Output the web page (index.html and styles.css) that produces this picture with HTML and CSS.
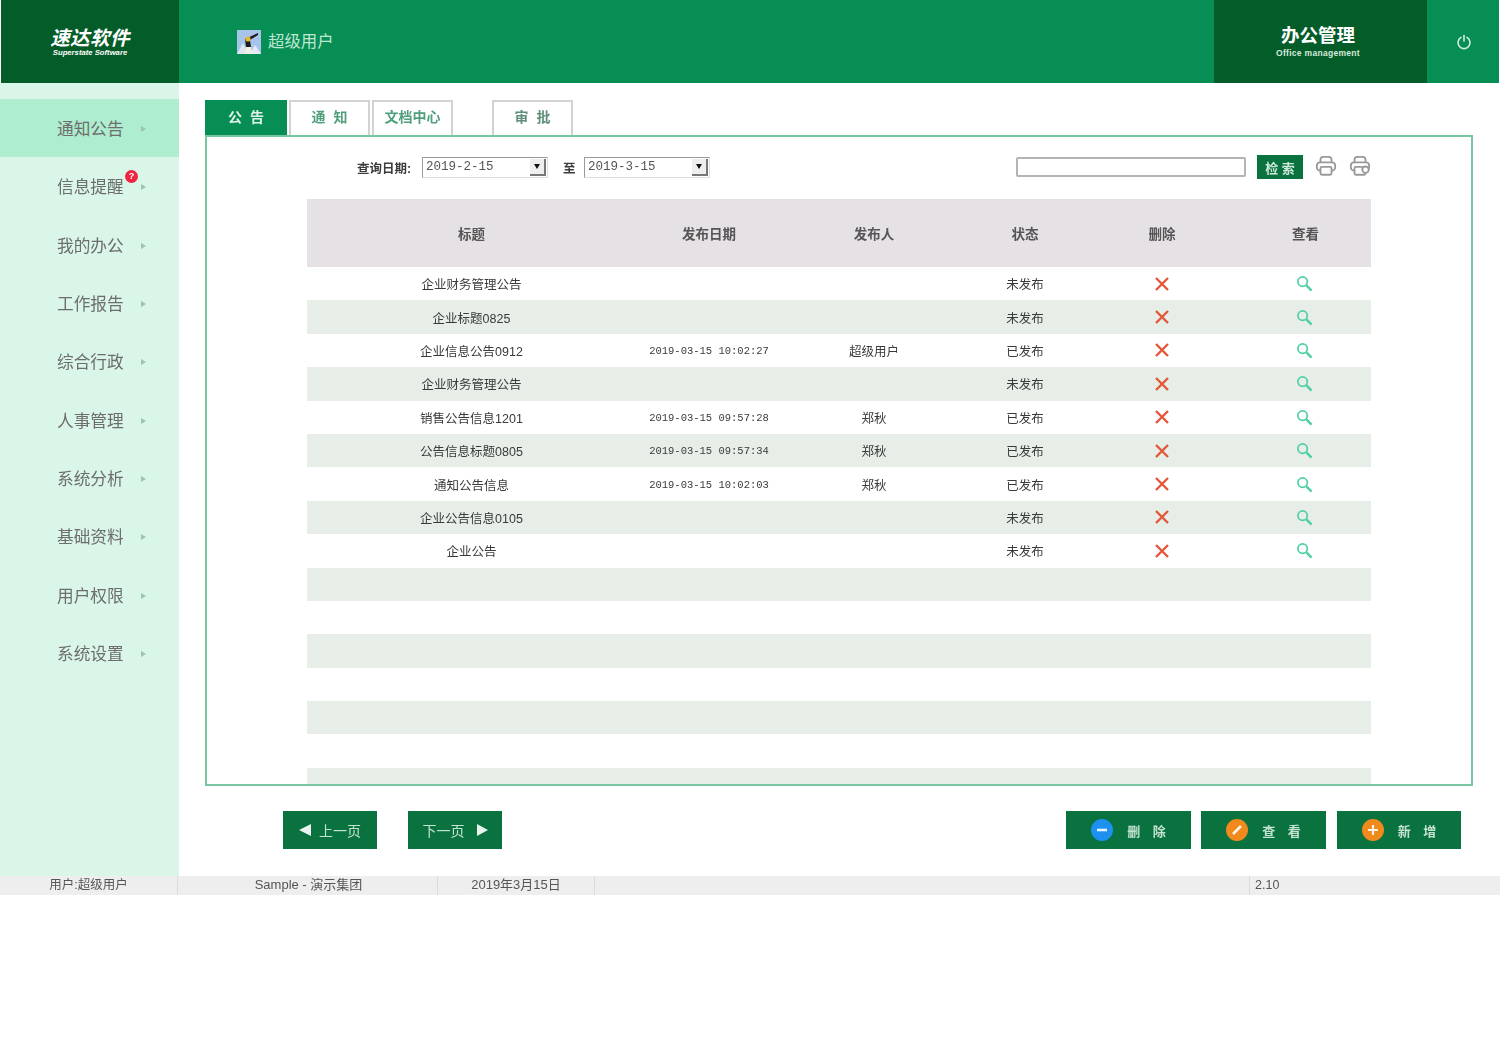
FILE: index.html
```html
<!DOCTYPE html>
<html lang="zh-CN">
<head>
  <meta charset="UTF-8">
  <title>速达软件 办公管理</title>
  <link rel="stylesheet" href="styles.css">
</head>
<body>
  <div class="app">
    <header class="topbar">
      <div class="brand">
        <strong>速达软件</strong>
        <small>Superstate Software</small>
      </div>
      <div class="user">
        <svg class="avatar" viewBox="0 0 24 24" width="24" height="24">
          <rect width="24" height="24" fill="#a9c4ea"/>
          <path d="M0 24 L6 13 L11 24 Z" fill="#dfe7f2"/>
          <path d="M13 24 L18 15 L24 24 Z" fill="#e6ebf3"/>
          <path d="M8 9 L21 3 L21 5 L13 10 L14 17 L9 17 Z" fill="#1c1c1c"/>
          <circle cx="11" cy="9" r="2.6" fill="#e8b830"/>
          <path d="M9 17 L14 17 L15 24 L8 24 Z" fill="#f3efe2"/>
        </svg>
        <span>超级用户</span>
      </div>
      <div class="module">
        <strong>办公管理</strong>
        <small>Office management</small>
      </div>
      <div class="power">
        <svg viewBox="0 0 16 16" width="16" height="16" fill="none" stroke="#d5efe2" stroke-width="1.6" stroke-linecap="round">
          <path d="M5 3.4 A6 6 0 1 0 11 3.4"/>
          <path d="M8 1.5 V7"/>
        </svg>
      </div>
    </header>

    <div class="middle">
      <nav class="sidebar">
        <a class="nav-item active"><span>通知公告</span><i></i></a>
        <a class="nav-item"><span>信息提醒</span><b class="badge">?</b><i></i></a>
        <a class="nav-item"><span>我的办公</span><i></i></a>
        <a class="nav-item"><span>工作报告</span><i></i></a>
        <a class="nav-item"><span>综合行政</span><i></i></a>
        <a class="nav-item"><span>人事管理</span><i></i></a>
        <a class="nav-item"><span>系统分析</span><i></i></a>
        <a class="nav-item"><span>基础资料</span><i></i></a>
        <a class="nav-item"><span>用户权限</span><i></i></a>
        <a class="nav-item"><span>系统设置</span><i></i></a>
      </nav>

      <main class="content">
        <div class="tabs">
          <a class="tab active">公&nbsp;&nbsp;告</a>
          <a class="tab">通&nbsp;&nbsp;知</a>
          <a class="tab">文档中心</a>
          <a class="tab tab-gap">审&nbsp;&nbsp;批</a>
        </div>

        <section class="panel">
          <div class="toolbar">
            <label class="date-label">查询日期:</label>
            <div class="date-field"><span>2019-2-15</span><i></i></div>
            <label class="date-sep">至</label>
            <div class="date-field"><span>2019-3-15</span><i></i></div>
            <div class="search-box"></div>
            <button class="search-btn">检 索</button>
            <svg class="tool-icon" viewBox="0 0 24 24" width="22" height="22" fill="none" stroke="#999" stroke-width="2">
              <path d="M6 8 V5 Q6 2 9 2 H15 Q18 2 18 5 V8"/>
              <rect x="2" y="8" width="20" height="9" rx="3.5"/>
              <rect x="6" y="13" width="12" height="8.5" rx="1.5" fill="#fff"/>
            </svg>
            <svg class="tool-icon" viewBox="0 0 24 24" width="22" height="22" fill="none" stroke="#999" stroke-width="2">
              <path d="M6 8 V5 Q6 2 9 2 H15 Q18 2 18 5 V8"/>
              <rect x="2" y="8" width="20" height="9" rx="3.5"/>
              <rect x="6" y="13" width="12" height="8.5" rx="1.5" fill="#fff"/>
              <circle cx="18" cy="16" r="3.5" fill="#fff"/>
            </svg>
          </div>

          <table class="grid">
            <colgroup>
              <col class="col-title"><col class="col-date"><col class="col-author">
              <col class="col-state"><col class="col-del"><col class="col-view">
            </colgroup>
            <thead>
              <tr><th>标题</th><th>发布日期</th><th>发布人</th><th>状态</th><th>删除</th><th>查看</th></tr>
            </thead>
            <tbody id="rows"></tbody>
          </table>
        </section>

        <div class="pager">
          <button class="btn btn-page"><i class="arrow-left"></i>上一页</button>
          <button class="btn btn-page"><span>下一页</span><i class="arrow-right"></i></button>
          <div class="actions">
            <button class="btn btn-action">
              <svg viewBox="0 0 22 22" width="22" height="22"><circle cx="11" cy="11" r="11" fill="#1e90f0"/><path d="M6 11 H16" stroke="#e8f4ff" stroke-width="2.6"/></svg>
              <span>删 除</span>
            </button>
            <button class="btn btn-action">
              <svg viewBox="0 0 22 22" width="22" height="22"><circle cx="11" cy="11" r="11" fill="#f08a1d"/><path d="M7 15 L15 7" stroke="#fff3e2" stroke-width="2.6"/></svg>
              <span>查 看</span>
            </button>
            <button class="btn btn-action btn-add">
              <svg viewBox="0 0 22 22" width="22" height="22"><circle cx="11" cy="11" r="11" fill="#f08a1d"/><path d="M6 11 H16 M11 6 V16" stroke="#fff3e2" stroke-width="2.2"/></svg>
              <span>新 增</span>
            </button>
          </div>
        </div>
      </main>
    </div>

    <footer class="statusbar">
      <div class="cell cell-user">用户:超级用户</div>
      <div class="cell cell-org">Sample - 演示集团</div>
      <div class="cell cell-day">2019年3月15日</div>
      <div class="cell cell-fill"></div>
      <div class="cell cell-ver">2.10</div>
    </footer>
  </div>

  <script>
    // 公告列表数据
    const notices = [
      ['企业财务管理公告', '', '', '未发布'],
      ['企业标题0825', '', '', '未发布'],
      ['企业信息公告0912', '2019-03-15 10:02:27', '超级用户', '已发布'],
      ['企业财务管理公告', '', '', '未发布'],
      ['销售公告信息1201', '2019-03-15 09:57:28', '郑秋', '已发布'],
      ['公告信息标题0805', '2019-03-15 09:57:34', '郑秋', '已发布'],
      ['通知公告信息', '2019-03-15 10:02:03', '郑秋', '已发布'],
      ['企业公告信息0105', '', '', '未发布'],
      ['企业公告', '', '', '未发布']
    ];
    const delIcon = '<svg viewBox="0 0 16 16" width="16" height="16"><path d="M2 2 L14 14 M14 2 L2 14" stroke="#e4573a" stroke-width="2.4"/></svg>';
    const viewIcon = '<svg viewBox="0 0 18 18" width="17" height="17" fill="none" stroke="#4fcfa6"><circle cx="7" cy="7" r="5" stroke-width="1.8"/><path d="M11 11 L16.5 16.5" stroke-width="2.6"/></svg>';
    let html = '';
    notices.forEach((n) => {
      html += `<tr><td>${n[0]}</td><td class="mono">${n[1]}</td><td>${n[2]}</td><td>${n[3]}</td><td>${delIcon}</td><td>${viewIcon}</td></tr>`;
    });
    // 空行补满表格
    for (let i = 0; i < 7; i++) {
      html += '<tr><td></td><td></td><td></td><td></td><td></td><td></td></tr>';
    }
    document.getElementById('rows').innerHTML = html;
  </script>
</body>
</html>
```

FILE: styles.css
```css
:root {
  --green: #068e55;
  --dark-green: #045c28;
  --btn-green: #09723f;
  --side-bg: #d9f6e8;
  --side-active: #aeedcf;
  --line: #79c6a2;
  --text: #3c3c3c;
}

* {
  box-sizing: border-box;
  margin: 0;
  padding: 0;
}

body {
  background: #fff;
  color: var(--text);
  font-family: "Liberation Sans", "Noto Sans CJK SC", sans-serif;
}

.app {
  display: flex;
  flex-direction: column;
  width: 1500px;
  height: 895px;
  filter: blur(0.7px);
}

/* 顶部 */
.topbar {
  display: flex;
  height: 83px;
  margin: 0 1px;
  background: var(--green);
  color: #fff;
}

.brand {
  display: flex;
  flex-direction: column;
  align-items: center;
  justify-content: center;
  width: 178px;
  background: var(--dark-green);
  padding-top: 1px;
}

.brand strong {
  font-size: 19.5px;
  line-height: 22px;
  font-style: italic;
  letter-spacing: 0.4px;
}

.brand small {
  font-size: 7.7px;
  line-height: 8px;
  font-weight: bold;
  font-style: italic;
}

.user {
  display: flex;
  align-items: center;
  gap: 7px;
  flex: 1;
  padding-left: 58px;
  font-size: 16.4px;
  color: #bfe6d2;
}

.user span {
  margin-top: -3px;
}

.module {
  display: flex;
  flex-direction: column;
  align-items: center;
  justify-content: center;
  width: 213px;
  padding-right: 5px;
  background: var(--dark-green);
}

.module strong {
  font-size: 18.5px;
  line-height: 22px;
}

.module small {
  font-size: 8.5px;
  line-height: 12px;
  font-weight: bold;
  letter-spacing: 0.3px;
  color: #d5ebdd;
}

.power {
  display: flex;
  align-items: center;
  justify-content: center;
  width: 72px;
  padding-left: 2px;
}

.middle {
  display: flex;
  flex: 1;
}

/* 左侧菜单 */
.sidebar {
  width: 179px;
  padding-top: 16px;
  background: var(--side-bg);
}

.nav-item {
  position: relative;
  display: flex;
  align-items: center;
  height: 58.3px;
  padding-left: 57px;
  font-size: 16.7px;
  color: #6d6d6d;
}

.nav-item.active {
  background: var(--side-active);
}

.nav-item i {
  margin: 2px 0 0 17px;
  border-left: 5px solid #9cc4b0;
  border-top: 3.5px solid transparent;
  border-bottom: 3.5px solid transparent;
}

.badge {
  position: absolute;
  left: 125px;
  top: 13px;
  width: 13px;
  height: 13px;
  border-radius: 50%;
  background: #ee2440;
  color: #fff;
  font-size: 9px;
  line-height: 13px;
  text-align: center;
}

/* 内容区 */
.content {
  flex: 1;
  padding: 17px 27px 0 26px;
}

.tabs {
  display: flex;
  gap: 2px;
  height: 35px;
}

.tab {
  width: 81px;
  border: 2px solid #d2d2d2;
  border-bottom: 0;
  font-size: 14px;
  line-height: 31px;
  text-align: center;
  font-weight: bold;
  color: #4f9f7c;
}

.tab.active {
  width: 82px;
  border-color: var(--green);
  background: var(--green);
  color: #dff3e8;
}

.tab-gap {
  margin-left: 37px;
  color: #5f8f79;
}

.panel {
  height: 651px;
  overflow: hidden;
  border: 2px solid var(--line);
}

.toolbar {
  display: flex;
  align-items: center;
  height: 62px;
  padding: 0 0 2px 150px;
  font-size: 12.5px;
}

.date-label {
  width: 65px;
  font-weight: bold;
}

.date-sep {
  width: 36px;
  padding-left: 15px;
  font-weight: bold;
}

.date-field {
  display: flex;
  justify-content: space-between;
  align-items: center;
  width: 126px;
  height: 21px;
  border: 1px solid #9a9a9a;
  border-right-color: #ddd;
  border-bottom-color: #ddd;
  padding: 0 1px 0 3px;
  font-family: "Liberation Mono", monospace;
  font-size: 12.5px;
  color: #555;
}

.date-field i {
  display: flex;
  align-items: center;
  justify-content: center;
  width: 16px;
  height: 17px;
  background: #eee;
  border-right: 2px solid #777;
  border-bottom: 2px solid #777;
}

.date-field i::before {
  content: "";
  border-top: 5px solid #111;
  border-left: 3.5px solid transparent;
  border-right: 3.5px solid transparent;
}

.search-box {
  width: 230px;
  height: 20px;
  margin-left: 306px;
  border: 2px solid #b4b4b4;
  border-radius: 2px;
  background: #fff;
}

.search-btn {
  width: 46px;
  height: 24px;
  margin-left: 11px;
  border: 0;
  background: var(--btn-green);
  color: #cde8d8;
  font-family: inherit;
  font-size: 13px;
  font-weight: bold;
}

.tool-icon {
  margin: 0 0 2px 12px;
}

/* 表格 */
.grid {
  width: 1064px;
  margin-left: 100px;
  border-collapse: collapse;
  table-layout: fixed;
  font-size: 12.5px;
}

.col-title { width: 329px; }
.col-date { width: 146px; }
.col-author { width: 184px; }
.col-state { width: 118px; }
.col-del { width: 156px; }
.col-view { width: 131px; }

.grid th {
  height: 68px;
  background: #e5e1e5;
  font-weight: bold;
  font-size: 13.5px;
  color: #555;
}

.grid td {
  height: 33.4px;
  text-align: center;
  vertical-align: middle;
  color: #3a3a3a;
}

.grid td svg {
  display: block;
  margin: 0 auto;
}

.grid td:last-child svg {
  transform: translateX(-1px);
}

.grid tbody tr:nth-child(even) {
  background: #e6eee7;
}

.mono {
  padding-top: 1px;
  font-family: "Liberation Mono", monospace;
  font-size: 10.5px;
  white-space: nowrap;
}

/* 底部按钮 */
.pager {
  display: flex;
  align-items: flex-start;
  gap: 31px;
  padding: 25px 12px 0 78px;
}

.btn {
  display: flex;
  align-items: center;
  justify-content: center;
  height: 38px;
  border: 0;
  background: var(--btn-green);
  color: #c4e2d1;
  font-family: inherit;
}

.btn-page {
  gap: 8px;
  width: 94px;
  font-size: 14px;
}

.arrow-left {
  border-right: 12px solid #e8f5ee;
  border-top: 6.5px solid transparent;
  border-bottom: 6.5px solid transparent;
}

.arrow-right {
  margin-left: 4px;
  border-left: 11px solid #e8f5ee;
  border-top: 6.5px solid transparent;
  border-bottom: 6.5px solid transparent;
}

.actions {
  display: flex;
  gap: 10px;
  margin-left: auto;
}

.btn-action {
  gap: 14px;
  width: 125px;
  font-size: 13px;
  font-weight: bold;
  word-spacing: 9px;
}

.btn-add {
  width: 124px;
  margin-left: 1px;
}

/* 状态栏 */
.statusbar {
  display: flex;
  height: 19px;
  background: #eeeeee;
  font-size: 12.5px;
  line-height: 19px;
  color: #555;
}

.cell {
  border-right: 1px solid #dcdcdc;
  text-align: center;
}

.cell-user { width: 178px; }
.cell-org { width: 260px; padding-left: 2px; font-size: 13px; line-height: 18px; }
.cell-day { width: 157px; font-size: 13px; line-height: 18px; }
.cell-fill { width: 655px; }

.cell-ver {
  flex: 1;
  border-right: 0;
  padding-left: 5px;
  text-align: left;
}
```
